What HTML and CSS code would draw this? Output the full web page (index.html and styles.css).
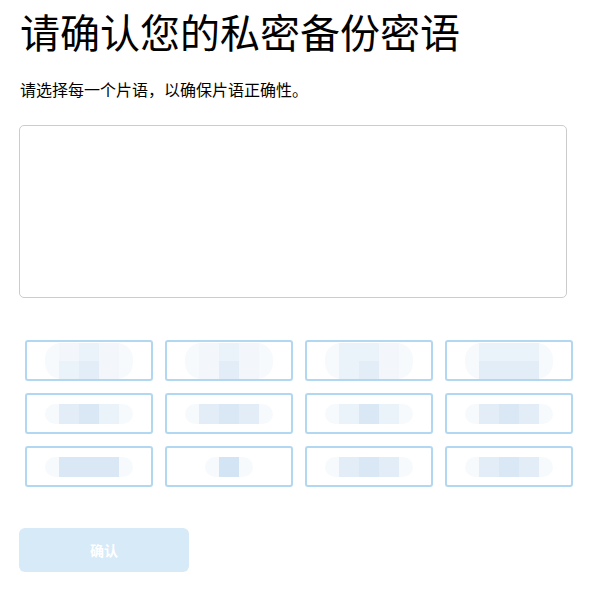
FILE: index.html
```html
<!DOCTYPE html>
<html lang="zh-CN">
<head>
  <meta charset="UTF-8" />
  <meta name="viewport" content="width=device-width, initial-scale=1.0"/>
  <title>确认私密备份密语</title>
  <link rel="stylesheet" href="styles.css">
</head>
<body>

  <div class="page">
    <h1>请确认您的私密备份密语</h1>
    <p class="hint">请选择每一个片语，以确保片语正确性。</p>

    <div class="answer-box"></div>

    <div class="words">
      <button class="word"><span class="blur two">
        <i class="s1"></i><i class="s2"></i><i class="s1"></i>
        <i class="s2"></i><i class="s3"></i><i class="s1"></i>
      </span></button>
      <button class="word"><span class="blur two">
        <i class="s1"></i><i class="s2"></i><i class="s1"></i>
        <i class="s1"></i><i class="s3"></i><i class="s1"></i>
      </span></button>
      <button class="word"><span class="blur two">
        <i class="s2"></i><i class="s2"></i><i class="s1"></i>
        <i class="s2"></i><i class="s3"></i><i class="s1"></i>
      </span></button>
      <button class="word"><span class="blur two">
        <i class="s2"></i><i class="s2"></i><i class="s2"></i>
        <i class="s3"></i><i class="s3"></i><i class="s3"></i>
      </span></button>

      <button class="word"><span class="blur">
        <i class="s3"></i><i class="s4"></i><i class="s2"></i>
      </span></button>
      <button class="word"><span class="blur">
        <i class="s3"></i><i class="s4"></i><i class="s3"></i>
      </span></button>
      <button class="word"><span class="blur">
        <i class="s2"></i><i class="s4"></i><i class="s2"></i>
      </span></button>
      <button class="word"><span class="blur">
        <i class="s3"></i><i class="s4"></i><i class="s3"></i>
      </span></button>

      <button class="word"><span class="blur">
        <i class="s4"></i><i class="s4"></i><i class="s4"></i>
      </span></button>
      <button class="word"><span class="blur">
        <i class="s5"></i>
      </span></button>
      <button class="word"><span class="blur">
        <i class="s3"></i><i class="s4"></i><i class="s3"></i>
      </span></button>
      <button class="word"><span class="blur">
        <i class="s3"></i><i class="s4"></i><i class="s3"></i>
      </span></button>
    </div>

    <button class="confirm-btn" disabled>确认</button>
  </div>

</body>
</html>
```

FILE: styles.css
```css
* {
  box-sizing: border-box;
  margin: 0;
  padding: 0;
}

body {
  font-family: "Noto Sans CJK SC", "Noto Sans", sans-serif;
  background: #ffffff;
  color: #000000;
}

.page {
  padding: 5px 19px 0 19px;
}

h1 {
  font-size: 40px;
  font-weight: 400;
  line-height: 53px;
  margin-left: 1px;
}

.hint {
  margin-top: 19px;
  font-size: 16px;
  line-height: 24px;
  margin-left: 1px;
}

.answer-box {
  margin-top: 24px;
  width: 548px;
  height: 173px;
  border: 1px solid #cccccc;
  border-radius: 5px;
}

.words {
  margin-top: 42px;
  padding-left: 6px;
  display: grid;
  grid-template-columns: repeat(4, 128px);
  column-gap: 12px;
  row-gap: 12px;
}

.word {
  height: 41px;
  border: 2px solid #b2d7f0;
  border-radius: 3px;
  background: #ffffff;
  display: flex;
  align-items: center;
  justify-content: center;
}

.blur {
  display: grid;
  grid-template-columns: repeat(3, 20px);
  padding: 0 14px;
  background: #f7fafd;
  border-radius: 16px;
}

.blur:has(> i:only-child) {
  grid-template-columns: 20px;
}

.blur i {
  display: block;
  height: 20px;
}

.blur.two i {
  height: 18px;
}

.s1 { background: #f3f7fc; }
.s2 { background: #eaf2fa; }
.s3 { background: #e2edf8; }
.s4 { background: #dae7f5; }
.s5 { background: #d3e4f4; }

.confirm-btn {
  display: block;
  margin-top: 41px;
  width: 170px;
  height: 44px;
  border: none;
  border-radius: 6px;
  background: #d7eaf8;
  color: #ffffff;
  font-family: "Noto Sans CJK SC", sans-serif;
  font-size: 14px;
  font-weight: 700;
}
```
